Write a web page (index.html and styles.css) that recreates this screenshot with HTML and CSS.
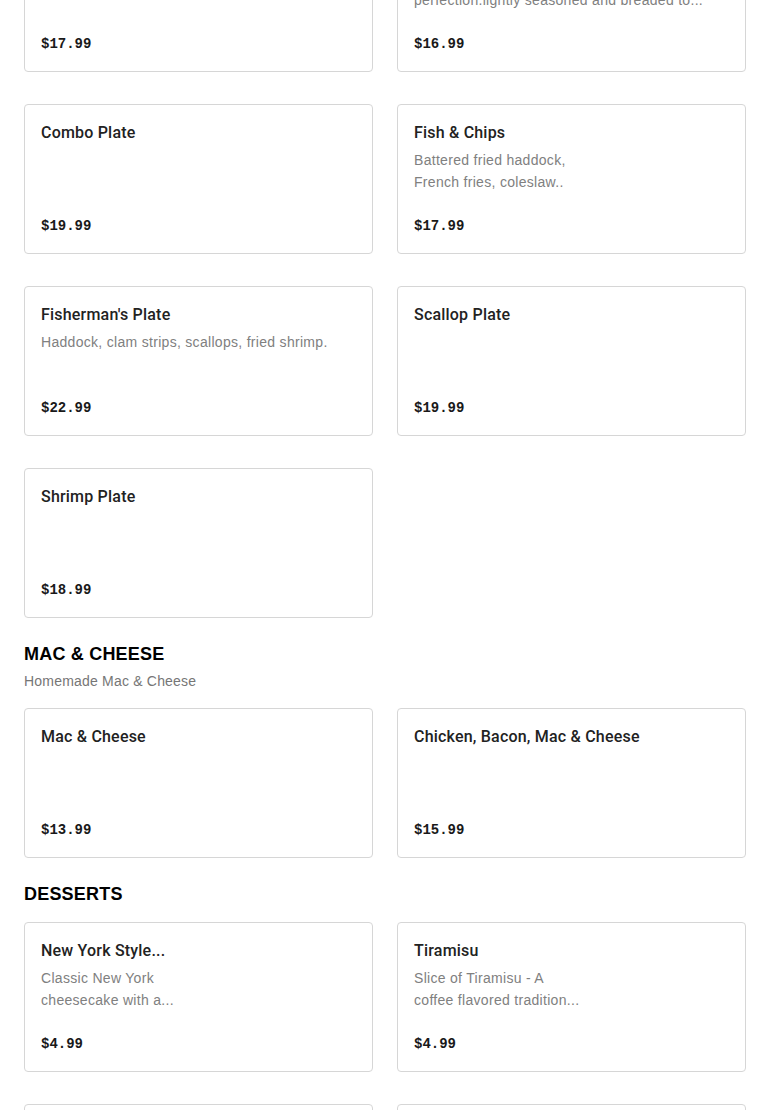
FILE: index.html
```html
<!DOCTYPE html>
<html lang="en">
<head>
    <meta charset="UTF-8">
    <meta name="viewport" content="width=device-width, initial-scale=1.0">
    <title>Menu</title>
    <link rel="stylesheet" href="styles.css">
</head>
<body>
    <div class="menu">
        <div class="menu-section">
            <div class="item-grid">
                <div class="item-card">
                    <div class="item-name">Clam Strip Plate</div>
                    <div class="item-price">$17.99</div>
                </div>
                <div class="item-card">
                    <div class="item-name">Shrimp Basket</div>
                    <div class="item-desc">Golden fried shrimp cooked to<br>perfection.lightly seasoned and breaded to...</div>
                    <div class="item-price">$16.99</div>
                </div>
                <div class="item-card">
                    <div class="item-name">Combo Plate</div>
                    <div class="item-price">$19.99</div>
                </div>
                <div class="item-card">
                    <div class="item-name">Fish &amp; Chips</div>
                    <div class="item-desc">Battered fried haddock,<br>French fries, coleslaw..</div>
                    <div class="item-price">$17.99</div>
                </div>
                <div class="item-card">
                    <div class="item-name">Fisherman's Plate</div>
                    <div class="item-desc">Haddock, clam strips, scallops, fried shrimp.</div>
                    <div class="item-price">$22.99</div>
                </div>
                <div class="item-card">
                    <div class="item-name">Scallop Plate</div>
                    <div class="item-price">$19.99</div>
                </div>
                <div class="item-card">
                    <div class="item-name">Shrimp Plate</div>
                    <div class="item-price">$18.99</div>
                </div>
            </div>
        </div>

        <div class="menu-section">
            <h2 class="section-title">MAC &amp; CHEESE</h2>
            <p class="section-desc">Homemade Mac &amp; Cheese</p>
            <div class="item-grid">
                <div class="item-card">
                    <div class="item-name">Mac &amp; Cheese</div>
                    <div class="item-price">$13.99</div>
                </div>
                <div class="item-card">
                    <div class="item-name">Chicken, Bacon, Mac &amp; Cheese</div>
                    <div class="item-price">$15.99</div>
                </div>
            </div>
        </div>

        <div class="menu-section">
            <h2 class="section-title">DESSERTS</h2>
            <div class="item-grid">
                <div class="item-card">
                    <div class="item-name">New York Style...</div>
                    <div class="item-desc">Classic New York<br>cheesecake with a...</div>
                    <div class="item-price">$4.99</div>
                </div>
                <div class="item-card">
                    <div class="item-name">Tiramisu</div>
                    <div class="item-desc">Slice of Tiramisu - A<br>coffee flavored tradition...</div>
                    <div class="item-price">$4.99</div>
                </div>
                <div class="item-card">
                    <div class="item-name">Chocolate Cake</div>
                    <div class="item-price">$4.99</div>
                </div>
                <div class="item-card">
                    <div class="item-name">Carrot Cake</div>
                    <div class="item-price">$4.99</div>
                </div>
            </div>
        </div>
    </div>
</body>
</html>
```

FILE: styles.css
```css
body {
    margin: 0;
    background: #ffffff;
    font-family: "Liberation Sans", Arial, sans-serif;
    color: #191919;
}

h2, p {
    margin: 0;
}

.menu {
    padding: 0 24px;
    margin-top: -78px;
}

.menu-section {
    margin-bottom: 24px;
}

.section-title {
    font-size: 18px;
    line-height: 24px;
    font-weight: 900;
    color: #000000;
    letter-spacing: 0.2px;
    margin-bottom: 16px;
}

.section-desc {
    font-size: 14px;
    line-height: 22px;
    color: #767676;
    letter-spacing: 0.2px;
    margin-top: -12px;
    margin-bottom: 16px;
}

.item-grid {
    display: grid;
    grid-template-columns: 1fr 1fr;
    column-gap: 24px;
    row-gap: 32px;
}

.item-card {
    display: flex;
    flex-direction: column;
    height: 150px;
    box-sizing: border-box;
    padding: 16px;
    border: 1px solid #d6d6d6;
    border-radius: 4px;
}

.item-name {
    font-family: Roboto, "Liberation Sans", sans-serif;
    font-size: 16px;
    line-height: 24px;
    font-weight: 500;
    letter-spacing: 0.2px;
    color: #222222;
}

.item-desc {
    margin-top: 4px;
    font-size: 14px;
    line-height: 22px;
    letter-spacing: 0.3px;
    color: #808080;
}

.item-price {
    margin-top: auto;
    font-family: "Liberation Mono", "Courier New", monospace;
    font-size: 14px;
    line-height: 22px;
    font-weight: bold;
    color: #191919;
}
```
